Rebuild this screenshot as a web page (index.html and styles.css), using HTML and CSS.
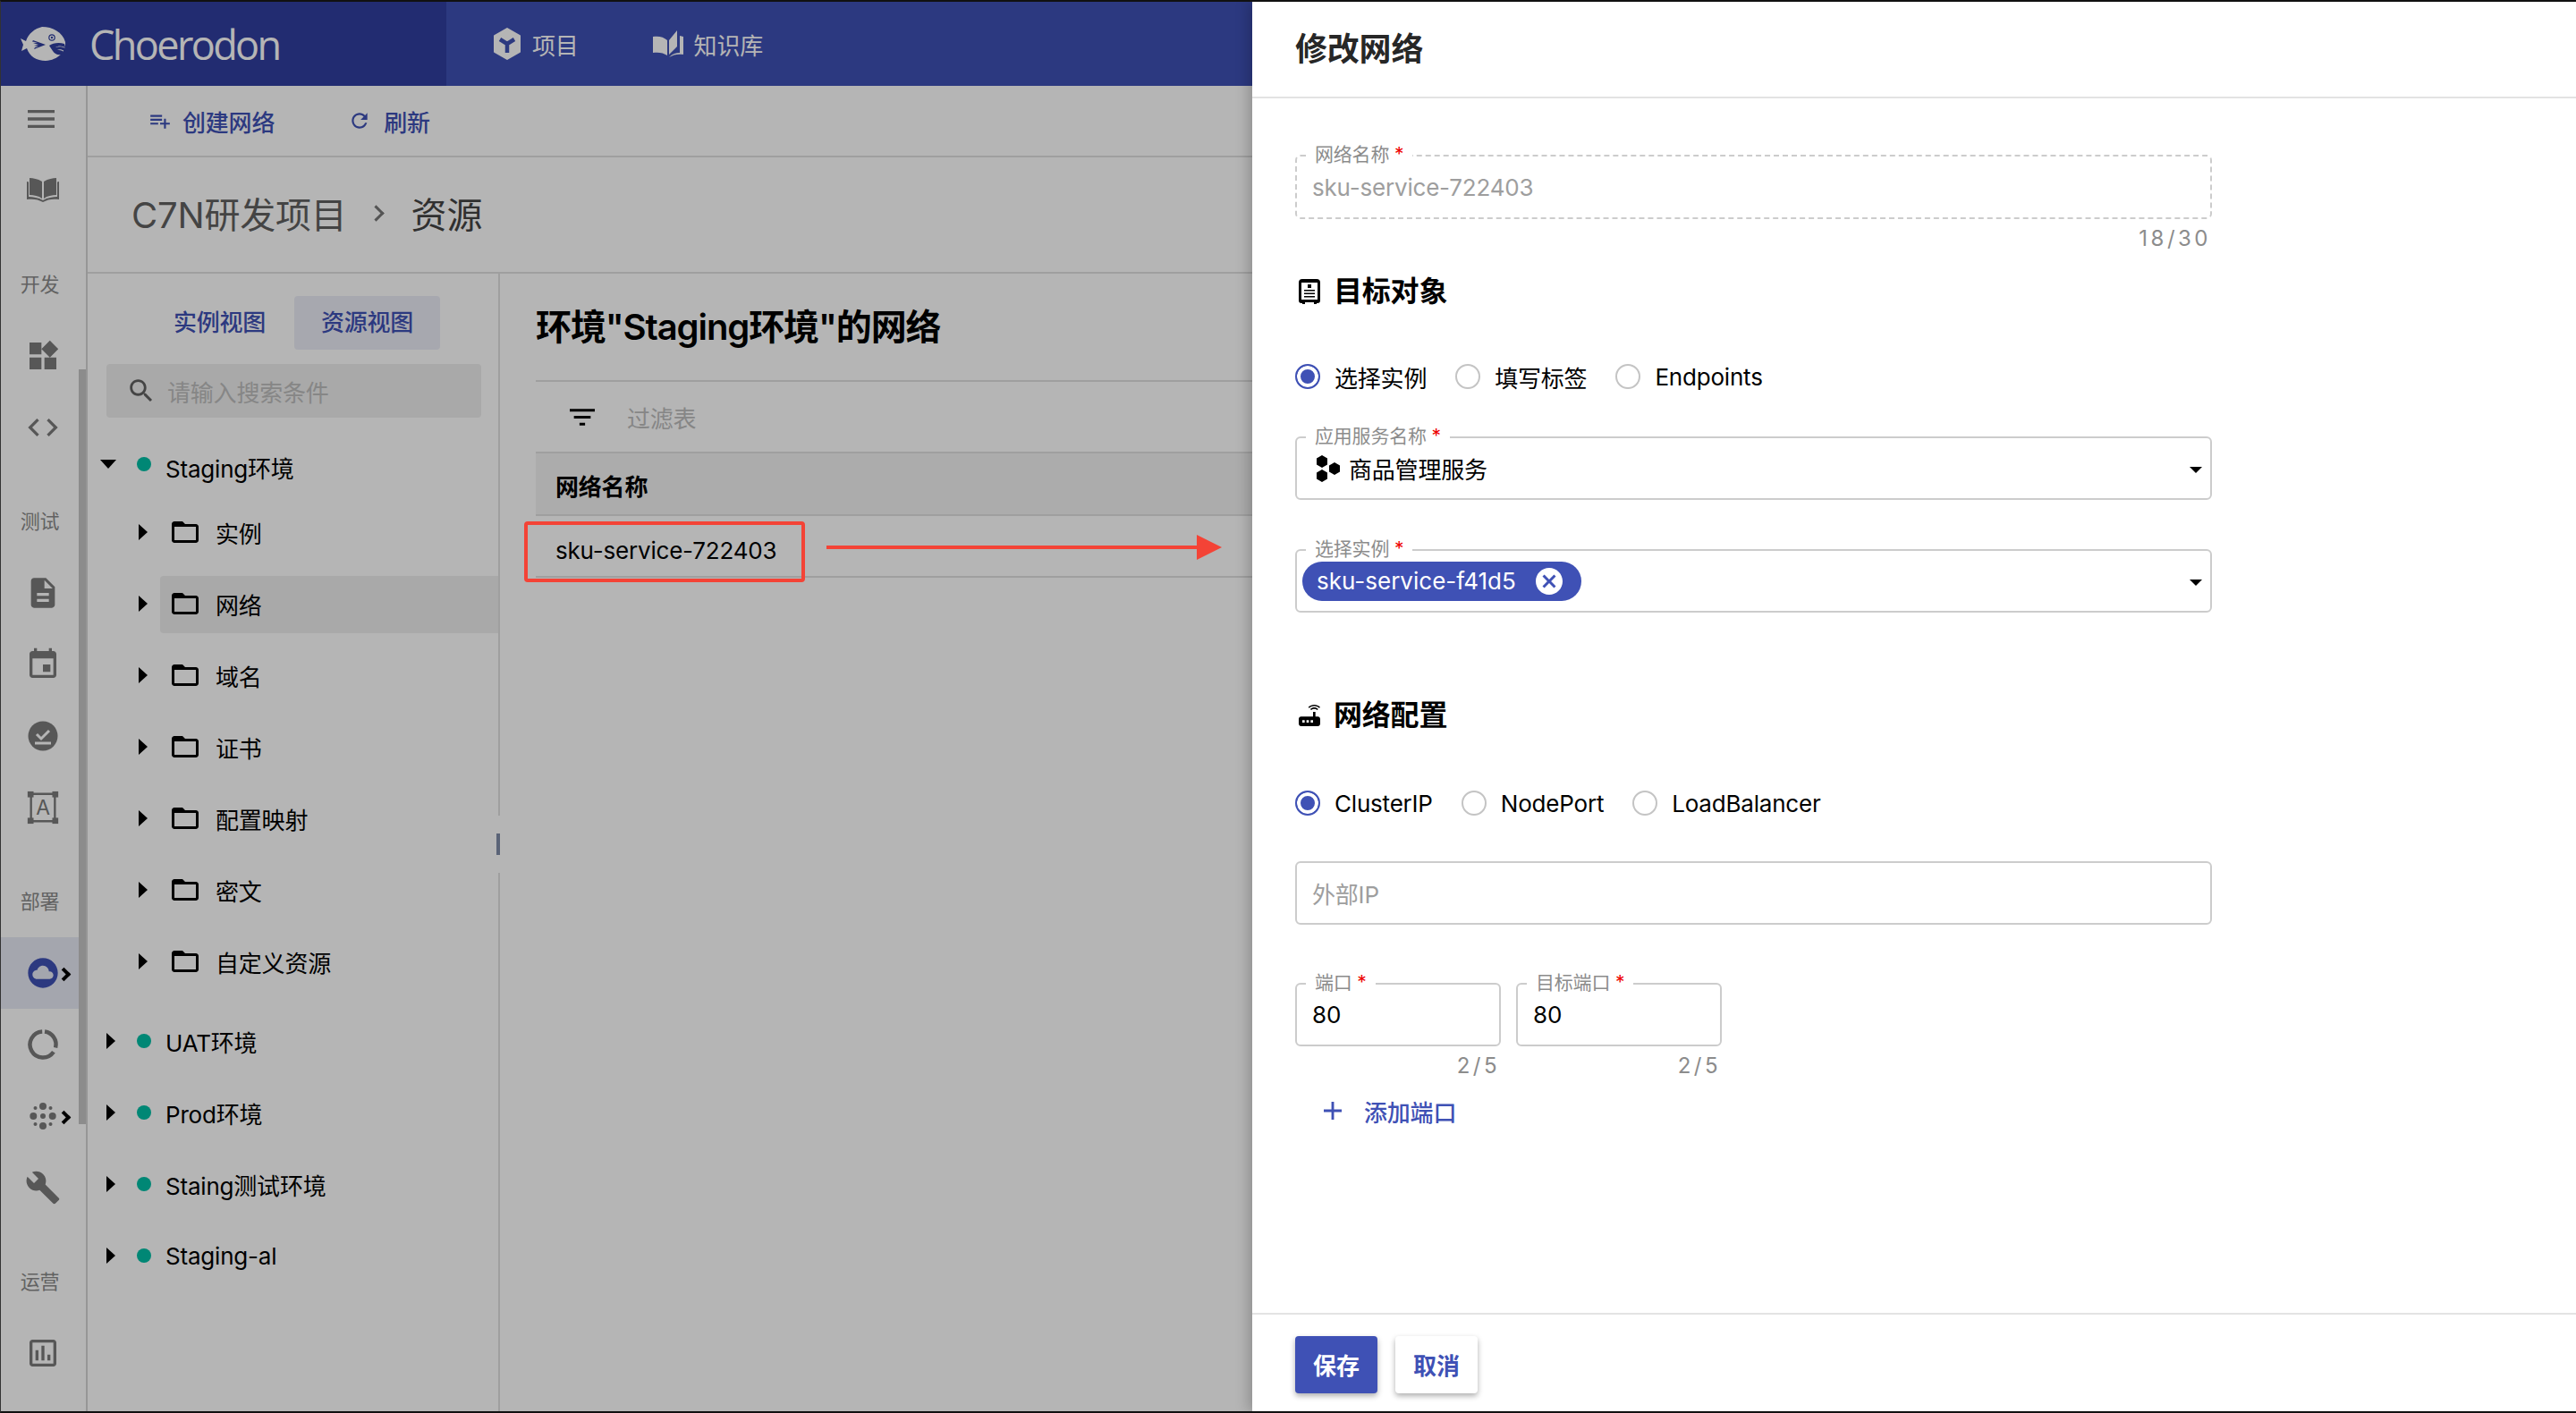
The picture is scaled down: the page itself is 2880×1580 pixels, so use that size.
FILE: index.html
```html
<!DOCTYPE html>
<html lang="en">
  <head>
    <meta charset="UTF-8" />
    <title>Choerodon - 修改网络</title>
    <link rel="stylesheet" href="styles.css">
  </head>

  <body>
    <div class="app">
      <header class="topbar">
        <div class="brand">
          <svg class="brand-logo" viewBox="0 0 52 38">
            <path fill="#fff" d="M1 13l6 3C10 7 17 2 25 0c12 0 23 6 26 17 1 11-8 20-22 21C19 38 11 33 8 24l-6 3 2-7z"/>
            <path fill="#303f9f" d="M15 15l14 5-13 5 1-2 4-1-5-1 5-1-6-2 5-.5-6-1z"/>
            <circle cx="36" cy="12" r="3.200" fill="none" stroke="#303f9f" stroke-width="1.200"/>
            <circle cx="36" cy="12" r="1.200" fill="#303f9f"/>
            <path fill="#303f9f" d="M33 21c4-3 11-4 17-2l1 4c-4-2-8-2-11 0 3-1 8-1 11 1l-1 3c-3-2-6-2-8-1 2 0 5 0 7 2l-2 3c-5 1-8-1-10-4z"/>
          </svg>
          <span class="brand-name">Choerodon</span>
        </div>
        <nav class="topnav">
          <a class="topnav-item">
            <svg class="topnav-cube" viewBox="0 0 32 36">
              <path fill="#fff" stroke="#fff" stroke-width="2" stroke-linejoin="round" d="M16 1l14 8v18l-14 8-14-8V9z"/>
              <path fill="none" stroke="#3f51b5" stroke-width="4.500" d="M8 13l8 5 8-5M16 18v10"/>
            </svg>
            项目
          </a>
          <a class="topnav-item">
            <svg class="topnav-book" viewBox="0 0 34 30">
              <path fill="#fff" d="M0 7c6-1 12 0 16 4v17c-4-3-10-4-16-3zM18 11L27 0v18l-9 9zM30 6l4 1v20c-6-1-11 0-16 3 4-4 8-5 12-5z"/>
            </svg>
            知识库
          </a>
        </nav>
      </header>

      <div class="workspace">
        <aside class="sidebar">
          <div class="side-item side-menu">
            <svg class="side-icon" viewBox="0 0 24 24"><path d="M3 18h18v-2H3v2zm0-5h18v-2H3v2zm0-7v2h18V6H3z"/></svg>
          </div>
          <div class="side-item">
            <svg class="side-icon" viewBox="0 0 40 40"><path d="M5 6c4 0 9 1 14 4v19c-4-3-9-4-14-4zM35 6c-4 0-9 1-14 4v19c4-3 9-4 14-4zM2 10l2 .5V27c5 0 11 1 16 4 5-3 11-4 16-4V10.500l2-.5v20c-7-1-13 0-18 3-5-3-11-4-18-3z"/></svg>
          </div>
          <div class="side-label">开发</div>
          <div class="side-item">
            <svg class="side-icon" viewBox="0 0 24 24"><path d="M13 13v8h8v-8h-8zM3 21h8v-8H3v8zM3 3v8h8V3H3zm13.660-1.310L11 7.340 16.660 13l5.660-5.660-5.660-5.650z"/></svg>
          </div>
          <div class="side-item">
            <svg class="side-icon" viewBox="0 0 24 24"><path d="M9.400 16.600L4.800 12l4.600-4.600L8 6l-6 6 6 6 1.400-1.400zm5.200 0l4.600-4.600-4.600-4.600L16 6l6 6-6 6-1.400-1.400z"/></svg>
          </div>
          <div class="side-label">测试</div>
          <div class="side-item">
            <svg class="side-icon" viewBox="0 0 24 24"><path d="M14 2H6c-1.100 0-1.990.9-1.990 2L4 20c0 1.100.89 2 1.990 2H18c1.100 0 2-.9 2-2V8l-6-6zm2 16H8v-2h8v2zm0-4H8v-2h8v2zm-3-5V3.500L18.500 9H13z"/></svg>
          </div>
          <div class="side-item">
            <svg class="side-icon" viewBox="0 0 24 24"><path d="M17 12h-5v5h5v-5zM16 1v2H8V1H6v2H5c-1.110 0-1.990.9-1.990 2L3 19c0 1.100.89 2 2 2h14c1.100 0 2-.9 2-2V5c0-1.100-.9-2-2-2h-1V1h-2zm3 18H5V8h14v11z"/></svg>
          </div>
          <div class="side-item">
            <svg class="side-icon" viewBox="0 0 40 40">
              <circle cx="20" cy="20" r="16.500"/>
              <path fill="none" stroke="#fff" stroke-width="3" d="M13 18l5 5 9-9"/>
              <path fill="none" stroke="#fff" stroke-width="3" d="M11 28h18"/>
            </svg>
          </div>
          <div class="side-item">
            <svg class="side-icon" viewBox="-2 -1 42 42">
              <path fill="none" stroke="currentColor" stroke-width="2.500" d="M5 4h28M5 36h28M5 4v32M33 4v32"/>
              <rect x="1" y="1" width="7" height="7"/><rect x="30" y="1" width="7" height="7"/>
              <rect x="1" y="32" width="7" height="7"/><rect x="30" y="32" width="7" height="7"/>
              <text x="19" y="28" class="icon-letter">A</text>
            </svg>
          </div>
          <div class="side-label">部署</div>
          <div class="side-item side-item-active">
            <svg class="side-icon" viewBox="0 0 24 24"><path d="M12 2C6.480 2 2 6.480 2 12s4.480 10 10 10 10-4.480 10-10S17.520 2 12 2zm4.500 14H8c-1.660 0-3-1.340-3-3s1.340-3 3-3l.14.01C8.580 8.280 10.130 7 12 7c2.210 0 4 1.790 4 4h.5c1.380 0 2.500 1.120 2.500 2.500S17.880 16 16.500 16z"/></svg>
            <span class="side-chevron"></span>
          </div>
          <div class="side-item">
            <svg class="side-icon" viewBox="0 0 40 40">
              <path fill="none" stroke="currentColor" stroke-width="4.500" d="M22 5.600A14.500 14.500 0 0 1 34.100 23.500M31.900 28.300A14.500 14.500 0 1 1 19.200 5.500"/>
            </svg>
          </div>
          <div class="side-item">
            <svg class="side-icon" viewBox="0 0 40 40">
              <circle cx="20" cy="9" r="4"/><circle cx="20" cy="31" r="4"/>
              <circle cx="9.300" cy="20" r="4"/><circle cx="20" cy="20" r="3"/><circle cx="30.700" cy="20" r="4"/>
              <circle cx="11.500" cy="11" r="2"/><circle cx="28.500" cy="11" r="2"/><circle cx="11.500" cy="29" r="2"/><circle cx="28.500" cy="29" r="2"/>
            </svg>
            <span class="side-chevron"></span>
          </div>
          <div class="side-item">
            <svg class="side-icon" viewBox="0 0 24 24"><path d="M22.700 19l-9.100-9.100c.9-2.300.4-5-1.500-6.900-2-2-5-2.400-7.400-1.300L9 6 6 9 1.600 4.700C.4 7.100.9 10.100 2.900 12.100c1.900 1.900 4.600 2.400 6.900 1.500l9.100 9.100c.4.4 1 .4 1.400 0l2.300-2.300c.5-.4.5-1.100.1-1.400z"/></svg>
          </div>
          <div class="side-label">运营</div>
          <div class="side-item">
            <svg class="side-icon" viewBox="0 0 24 24"><path d="M19 3H5c-1.100 0-2 .9-2 2v14c0 1.100.9 2 2 2h14c1.100 0 2-.9 2-2V5c0-1.100-.9-2-2-2zm0 16H5V5h14v14zM7 10h2v7H7zm4-3h2v10h-2zm4 6h2v4h-2z"/></svg>
          </div>
          <div class="side-scroll"></div>
        </aside>

        <main class="content">
          <div class="toolbar">
            <a class="tool-btn">
              <svg class="tool-icon" viewBox="0 0 24 24"><path d="M14 10H2v2h12v-2zm0-4H2v2h12V6zm4 8v-4h-2v4h-4v2h4v4h2v-4h4v-2h-4zM2 16h8v-2H2v2z"/></svg>
              创建网络
            </a>
            <a class="tool-btn tool-refresh">
              <svg class="tool-icon" viewBox="0 0 24 24"><path d="M17.650 6.350C16.200 4.900 14.210 4 12 4c-4.420 0-7.990 3.580-7.990 8s3.570 8 7.990 8c3.730 0 6.840-2.550 7.730-6h-2.080c-.82 2.330-3.040 4-5.650 4-3.310 0-6-2.690-6-6s2.690-6 6-6c1.660 0 3.140.69 4.220 1.780L13 11h7V4l-2.350 2.350z"/></svg>
              刷新
            </a>
          </div>

          <div class="breadcrumb">
            <span class="crumb-parent">C7N研发项目</span>
            <span class="crumb-sep"></span>
            <span class="crumb-current">资源</span>
          </div>

          <div class="split">
            <section class="tree-panel">
              <div class="view-tabs">
                <span class="view-tab">实例视图</span>
                <span class="view-tab view-tab-active">资源视图</span>
              </div>
              <div class="tree-search">
                <svg class="search-icon" viewBox="0 0 24 24"><path d="M15.500 14h-.79l-.28-.27C15.410 12.590 16 11.110 16 9.500 16 5.910 13.090 3 9.500 3S3 5.910 3 9.500 5.910 16 9.500 16c1.610 0 3.090-.59 4.230-1.570l.27.28v.79l5 4.990L20.490 19l-4.990-5zm-6 0C7.010 14 5 11.990 5 9.500S7.010 5 9.500 5 14 7.010 14 9.500 11.990 14 9.500 14z"/></svg>
                请输入搜索条件
              </div>

              <ul class="tree">
                <li class="tree-env tree-env-open"><span class="caret-down"></span><span class="env-dot"></span><span class="env-name">Staging环境</span></li>
                <li class="tree-leaf"><span class="caret-right"></span><svg class="folder" viewBox="2 4 20 16"><path d="M20 6h-8l-2-2H4c-1.100 0-1.990.9-1.990 2L2 18c0 1.100.9 2 2 2h16c1.100 0 2-.9 2-2V8c0-1.100-.9-2-2-2zm0 12H4V8h16v10z"/></svg>实例</li>
                <li class="tree-leaf tree-leaf-active"><span class="caret-right"></span><svg class="folder" viewBox="2 4 20 16"><path d="M20 6h-8l-2-2H4c-1.100 0-1.990.9-1.990 2L2 18c0 1.100.9 2 2 2h16c1.100 0 2-.9 2-2V8c0-1.100-.9-2-2-2zm0 12H4V8h16v10z"/></svg>网络</li>
                <li class="tree-leaf"><span class="caret-right"></span><svg class="folder" viewBox="2 4 20 16"><path d="M20 6h-8l-2-2H4c-1.100 0-1.990.9-1.990 2L2 18c0 1.100.9 2 2 2h16c1.100 0 2-.9 2-2V8c0-1.100-.9-2-2-2zm0 12H4V8h16v10z"/></svg>域名</li>
                <li class="tree-leaf"><span class="caret-right"></span><svg class="folder" viewBox="2 4 20 16"><path d="M20 6h-8l-2-2H4c-1.100 0-1.990.9-1.990 2L2 18c0 1.100.9 2 2 2h16c1.100 0 2-.9 2-2V8c0-1.100-.9-2-2-2zm0 12H4V8h16v10z"/></svg>证书</li>
                <li class="tree-leaf"><span class="caret-right"></span><svg class="folder" viewBox="2 4 20 16"><path d="M20 6h-8l-2-2H4c-1.100 0-1.990.9-1.990 2L2 18c0 1.100.9 2 2 2h16c1.100 0 2-.9 2-2V8c0-1.100-.9-2-2-2zm0 12H4V8h16v10z"/></svg>配置映射</li>
                <li class="tree-leaf"><span class="caret-right"></span><svg class="folder" viewBox="2 4 20 16"><path d="M20 6h-8l-2-2H4c-1.100 0-1.990.9-1.990 2L2 18c0 1.100.9 2 2 2h16c1.100 0 2-.9 2-2V8c0-1.100-.9-2-2-2zm0 12H4V8h16v10z"/></svg>密文</li>
                <li class="tree-leaf"><span class="caret-right"></span><svg class="folder" viewBox="2 4 20 16"><path d="M20 6h-8l-2-2H4c-1.100 0-1.990.9-1.990 2L2 18c0 1.100.9 2 2 2h16c1.100 0 2-.9 2-2V8c0-1.100-.9-2-2-2zm0 12H4V8h16v10z"/></svg>自定义资源</li>
                <li class="tree-env tree-env-gap"><span class="caret-right"></span><span class="env-dot"></span>UAT环境</li>
                <li class="tree-env"><span class="caret-right"></span><span class="env-dot"></span>Prod环境</li>
                <li class="tree-env"><span class="caret-right"></span><span class="env-dot"></span>Staing测试环境</li>
                <li class="tree-env"><span class="caret-right"></span><span class="env-dot"></span>Staging-al</li>
              </ul>
              <span class="panel-handle"></span>
            </section>

            <section class="list-panel">
              <h2 class="list-title">环境"Staging环境"的网络</h2>
              <div class="filter-bar">
                <svg class="filter-icon" viewBox="3 6 18 12"><path d="M10 18h4v-2h-4v2zM3 6v2h18V6H3zm3 7h12v-2H6v2z"/></svg>
                过滤表
              </div>
              <div class="table-head">网络名称</div>
              <div class="table-row">sku-service-722403</div>
            </section>
          </div>
        </main>
      </div>

      <div class="dim"></div>

      <!-- red annotation drawn on the screenshot -->
      <div class="mark-box"></div>
      <svg class="mark-arrow" viewBox="0 0 442 28">
        <path d="M0 12h414V0l28 14-28 14V16H0z"/>
      </svg>

      <aside class="modal">
        <h1 class="modal-head">修改网络</h1>

        <div class="modal-body">
          <div class="field field-disabled">
            <label class="field-label">网络名称 <i>*</i></label>
            <span class="field-value">sku-service-722403</span>
          </div>
          <div class="field-count field-count-name">18/30</div>

          <h3 class="section-title section-target">
            <svg class="section-icon" viewBox="0 0 24 28">
              <path fill-rule="evenodd" d="M4 0h16a4 4 0 0 1 4 4v20a3 3 0 0 1-3 3h-1v1h-3v-2H7v2H4v-1H3a3 3 0 0 1-3-3V4a4 4 0 0 1 4-4zM3 4v19h18V4zm7 2h4v4h-4zm-4 6h12v1.500H6zm0 3.500h12V17H6zM6 19h12v1.500H6z"/>
            </svg>
            目标对象
          </h3>

          <div class="radios radios-target">
            <label class="radio radio-on"><span class="radio-mark"></span>选择实例</label>
            <label class="radio"><span class="radio-mark"></span>填写标签</label>
            <label class="radio"><span class="radio-mark"></span>Endpoints</label>
          </div>

          <div class="field field-select field-service">
            <label class="field-label">应用服务名称 <i>*</i></label>
            <svg class="service-icon" viewBox="0 0 29 30">
              <path d="M8 0l6 3.500v7L8 14l-6-3.500v-7zM8 16l6 3.500v7L8 30l-6-3.500v-7zM22 8l6 3.500v7L22 22l-6-3.500v-7z"/>
            </svg>
            <span class="field-value">商品管理服务</span>
            <span class="select-caret"></span>
          </div>

          <div class="field field-select field-instance">
            <label class="field-label">选择实例 <i>*</i></label>
            <span class="chip">
              sku-service-f41d5
              <svg class="chip-close" viewBox="2 2 20 20"><path d="M12 2C6.470 2 2 6.470 2 12s4.470 10 10 10 10-4.470 10-10S17.530 2 12 2zm5 13.590L15.590 17 12 13.410 8.410 17 7 15.590 10.590 12 7 8.410 8.410 7 12 10.590 15.590 7 17 8.410 13.410 12 17 15.590z"/></svg>
            </span>
            <span class="select-caret"></span>
          </div>

          <h3 class="section-title section-network">
            <svg class="section-icon" viewBox="3 3 18 18"><path d="M20.200 5.900l.8-.8C19.600 3.700 17.800 3 16 3s-3.600.7-5 2.100l.8.8C13 4.800 14.500 4.200 16 4.200s3 .6 4.200 1.700zm-.9.8c-.9-.9-2.100-1.400-3.300-1.400s-2.400.5-3.300 1.400l.8.8c.7-.7 1.600-1 2.500-1 .9 0 1.800.3 2.500 1l.8-.8zM19 13h-2V9h-2v4H5c-1.100 0-2 .9-2 2v4c0 1.100.9 2 2 2h14c1.100 0 2-.9 2-2v-4c0-1.100-.9-2-2-2zM8 18H6v-2h2v2zm3.500 0h-2v-2h2v2zm3.500 0h-2v-2h2v2z"/></svg>
            网络配置
          </h3>

          <div class="radios radios-network">
            <label class="radio radio-on"><span class="radio-mark"></span>ClusterIP</label>
            <label class="radio"><span class="radio-mark"></span>NodePort</label>
            <label class="radio"><span class="radio-mark"></span>LoadBalancer</label>
          </div>

          <div class="field field-ip">
            <span class="field-placeholder">外部IP</span>
          </div>

          <div class="ports">
            <div class="port">
              <div class="field">
                <label class="field-label">端口 <i>*</i></label>
                <span class="field-value">80</span>
              </div>
              <div class="field-count">2/5</div>
            </div>
            <div class="port">
              <div class="field">
                <label class="field-label">目标端口 <i>*</i></label>
                <span class="field-value">80</span>
              </div>
              <div class="field-count">2/5</div>
            </div>
          </div>

          <a class="add-port">
            <svg class="add-icon" viewBox="5 5 14 14"><path d="M19 13h-6v6h-2v-6H5v-2h6V5h2v6h6v2z"/></svg>
            添加端口
          </a>
        </div>

        <div class="modal-foot">
          <button class="btn btn-primary">保存</button>
          <button class="btn">取消</button>
        </div>
      </aside>
    </div>
  </body>
</html>
```

FILE: styles.css
```css
* {
  box-sizing: border-box;
  margin: 0;
  padding: 0;
}

body {
  font-family: Inter, "Noto Sans CJK SC", sans-serif;
  font-size: 26px;
  letter-spacing: -0.2px;
  color: #000;
  background: #fff;
  width: 2880px;
  height: 1580px;
  overflow: hidden;
}

.app {
  position: relative;
  width: 2880px;
  height: 1580px;
  display: flex;
  flex-direction: column;
  border-top: 2px solid #111;
  border-bottom: 2px solid #111;
  border-left: 1px solid #333;
  overflow: hidden;
}

/* top bar */
.topbar {
  height: 94px;
  flex: none;
  display: flex;
  background: #3f51b5;
  color: #fff;
}

.brand {
  width: 498px;
  background: #303f9f;
  display: flex;
  align-items: center;
  padding-left: 21px;
}

.brand-logo {
  width: 52px;
  height: 38px;
  margin-right: 26px;
}

.brand-name {
  font-family: "Open Sans", sans-serif;
  font-size: 45px;
  font-weight: 400;
  letter-spacing: -2.6px;
}

.topnav {
  display: flex;
  align-items: center;
  padding-left: 52px;
}

.topnav-item {
  display: flex;
  align-items: center;
  gap: 12px;
  margin-right: 83px;
}

.topnav-cube {
  width: 32px;
  height: 36px;
}

.topnav-book {
  width: 34px;
  height: 30px;
}

.workspace {
  flex: 1;
  display: flex;
  min-height: 0;
}

/* sidebar */
.sidebar {
  position: relative;
  width: 97px;
  flex: none;
  border-right: 2px solid #d4d4d4;
  color: #7b7b7b;
}

.side-item {
  position: relative;
  width: 87px;
  height: 80px;
  display: flex;
  align-items: center;
  justify-content: center;
  padding-left: 7px;
}

.side-menu {
  height: 74px;
  margin-bottom: 3px;
  padding-left: 3px;
}

.side-item-active {
  background: #e8eaf6;
  color: #3f51b5;
}

.side-icon {
  width: 40px;
  height: 40px;
  fill: currentColor;
}

.icon-letter {
  font-size: 24px;
  text-anchor: middle;
  fill: currentColor;
}

.side-label {
  height: 105px;
  width: 87px;
  display: flex;
  align-items: flex-end;
  justify-content: center;
  padding-bottom: 24px;
  line-height: 32px;
  font-size: 22px;
  color: #8a8a8a;
}

.side-chevron {
  position: absolute;
  right: 11px;
  top: 50%;
  width: 11px;
  height: 11px;
  margin-top: -4px;
  border-top: 4px solid #000;
  border-right: 4px solid #000;
  transform: rotate(45deg);
}

.side-scroll {
  position: absolute;
  left: 87px;
  top: 317px;
  width: 8px;
  height: 844px;
  background: #c6c6c6;
}

/* main area */
.content {
  flex: 1;
  display: flex;
  flex-direction: column;
  min-width: 0;
}

.toolbar {
  height: 80px;
  flex: none;
  display: flex;
  align-items: center;
  padding-left: 68px;
  border-bottom: 2px solid #e0e0e0;
  color: #3f51b5;
  font-weight: 500;
}

.tool-btn {
  display: flex;
  align-items: center;
  gap: 12px;
}

.tool-refresh {
  margin-left: 82px;
  gap: 14px;
}

.tool-icon {
  width: 26px;
  height: 26px;
  fill: currentColor;
}

.breadcrumb {
  height: 130px;
  flex: none;
  display: flex;
  align-items: center;
  padding: 0 0 4px 49px;
  border-bottom: 2px solid #e0e0e0;
  font-size: 40px;
  font-weight: 400;
}

.crumb-parent {
  color: #616161;
}

.crumb-sep {
  width: 13px;
  height: 13px;
  margin: 0 33px 0 26px;
  border-top: 3px solid #777;
  border-right: 3px solid #777;
  transform: rotate(45deg);
}

.crumb-current {
  color: #444;
}

.split {
  flex: 1;
  display: flex;
  min-height: 0;
}

/* tree */
.tree-panel {
  position: relative;
  width: 461px;
  flex: none;
  border-right: 2px solid #e0e0e0;
}

.view-tabs {
  display: flex;
  padding: 25px 0 0 68px;
  color: #3f51b5;
}

.view-tab {
  width: 163px;
  height: 60px;
  line-height: 60px;
  text-align: center;
  border-radius: 4px;
  font-weight: 500;
}

.view-tab:first-child {
  padding-right: 4px;
}

.view-tab-active {
  background: #ecedf7;
}

.tree-search {
  display: flex;
  align-items: center;
  gap: 12px;
  width: 419px;
  height: 60px;
  margin: 16px 0 0 21px;
  padding-left: 22px;
  border-radius: 4px;
  background: #eeeeee;
  color: #bdbdbd;
}

.search-icon {
  width: 34px;
  height: 34px;
  fill: #616161;
}

.tree {
  list-style: none;
  margin-top: 16px;
}

.tree-env,
.tree-leaf {
  display: flex;
  align-items: center;
  height: 80px;
}

.tree-env {
  padding-left: 21px;
}

.tree-env-open {
  height: 72px;
  padding-left: 14px;
}

.env-name {
  padding-top: 6px;
}

.tree-env-gap {
  margin-top: 9px;
}

.tree-leaf {
  margin-left: 81px;
}

.tree-leaf-active {
  position: relative;
  z-index: 0;
}

.tree-leaf-active::before {
  content: "";
  position: absolute;
  z-index: -1;
  left: 0;
  right: 0;
  top: 9px;
  height: 64px;
  border-radius: 4px 0 0 4px;
  background: #eeeeee;
}

.caret-right {
  width: 0;
  height: 0;
  flex: none;
  border-top: 9px solid transparent;
  border-bottom: 9px solid transparent;
  border-left: 10px solid #000;
}

.caret-down {
  width: 0;
  height: 0;
  flex: none;
  border-left: 9px solid transparent;
  border-right: 9px solid transparent;
  border-top: 10px solid #000;
  margin-right: 23px;
}

.tree-env .caret-right {
  margin-right: 24px;
}

.tree-env .env-dot {
  margin-right: 16px;
}

.tree-leaf .caret-right {
  margin-left: -24px;
  margin-right: 27px;
}

.env-dot {
  width: 16px;
  height: 16px;
  flex: none;
  border-radius: 50%;
  background: #00bfa5;
}

.tree-leaf .folder {
  width: 30px;
  height: 24px;
  margin-right: 19px;
  flex: none;
}

.panel-handle {
  position: absolute;
  right: -2px;
  top: 626px;
  width: 4px;
  height: 24px;
  background: #7f8ca8;
  box-shadow: 0 -20px 0 #fff, 0 20px 0 #fff;
}

/* list */
.list-panel {
  flex: 1;
  padding-left: 40px;
  min-width: 0;
}

.list-title {
  height: 119px;
  line-height: 84px;
  padding-top: 18px;
  font-size: 40px;
  font-weight: 600;
  letter-spacing: -1.1px;
}

.filter-bar {
  height: 80px;
  display: flex;
  align-items: center;
  padding-left: 38px;
  gap: 36px;
  border-top: 2px solid #e0e0e0;
  color: #bdbdbd;
}

.filter-icon {
  width: 28px;
  height: 19px;
}

.table-head {
  height: 72px;
  display: flex;
  align-items: center;
  padding: 3px 0 0 22px;
  background: #f2f2f2;
  border-top: 2px solid #e0e0e0;
  border-bottom: 2px solid #e0e0e0;
  font-weight: 600;
}

.table-row {
  height: 69px;
  display: flex;
  align-items: center;
  padding: 9px 0 0 22px;
  border-bottom: 2px solid #e0e0e0;
}

.dim {
  position: absolute;
  inset: 0;
  background: rgba(0, 0, 0, 0.29);
}

/* annotation */
.mark-box {
  position: absolute;
  left: 585px;
  top: 581px;
  width: 314px;
  height: 68px;
  border: 4px solid #f44336;
  border-radius: 4px;
}

.mark-arrow {
  position: absolute;
  left: 923px;
  top: 596px;
  width: 442px;
  height: 28px;
  fill: #f44336;
}

/* modal */
.modal {
  position: absolute;
  top: 0;
  right: 0;
  bottom: 0;
  width: 1480px;
  display: flex;
  flex-direction: column;
  background: #fff;
  box-shadow: -4px 0 14px rgba(0, 0, 0, 0.22);
}

.modal-head {
  height: 108px;
  flex: none;
  display: flex;
  align-items: center;
  padding: 0 0 6px 48px;
  border-bottom: 2px solid #e3e3e3;
  font-size: 36px;
  font-weight: 600;
  color: rgba(0, 0, 0, 0.87);
}

.modal-body {
  flex: 1;
  padding: 63px 0 0 48px;
  min-height: 0;
}

.field {
  position: relative;
  width: 1025px;
  height: 71px;
  display: flex;
  align-items: center;
  padding-left: 17px;
  border: 2px solid #ccc;
  border-radius: 6px;
}

.field-disabled {
  height: 72px;
  border-style: dashed;
  color: #9e9e9e;
}

.field-label {
  position: absolute;
  left: 10px;
  top: -14px;
  padding: 0 10px;
  background: #fff;
  font-size: 21px;
  line-height: 24px;
  color: #8c8c8c;
  white-space: nowrap;
}

.field-label i {
  font-style: normal;
  color: #e00;
}

.field-placeholder {
  color: #9e9e9e;
}

.field-count {
  text-align: right;
  padding-right: 1px;
  font-size: 24px;
  line-height: 44px;
  letter-spacing: 3.5px;
  color: #8c8c8c;
}

.field-count-name {
  width: 1025px;
}

.section-title {
  display: flex;
  align-items: center;
  gap: 15px;
  font-size: 32px;
  line-height: 40px;
  font-weight: 600;
}

.section-target {
  margin-top: 17px;
}

.section-network {
  margin-top: 95px;
}

.section-icon {
  width: 24px;
  height: 28px;
  margin-left: 4px;
  flex: none;
}

.radios {
  display: flex;
  gap: 32px;
  height: 28px;
  align-items: center;
}

.radios-target {
  margin-top: 61px;
}

.radios-network {
  margin-top: 64px;
}

.radio {
  display: flex;
  align-items: center;
  gap: 16px;
}

.radio-mark {
  width: 28px;
  height: 28px;
  flex: none;
  border: 2px solid #c4c4c4;
  border-radius: 50%;
}

.radio-on .radio-mark {
  border-color: #3f51b5;
  background: #3f51b5;
  box-shadow: inset 0 0 0 4px #fff;
}

.field-service {
  margin-top: 53px;
  gap: 9px;
  padding-left: 20px;
}

.field-instance {
  margin-top: 55px;
  padding-left: 6px;
}

.service-icon {
  width: 29px;
  height: 30px;
  flex: none;
}

.select-caret {
  position: absolute;
  right: 9px;
  top: 32px;
  width: 0;
  height: 0;
  border-left: 7px solid transparent;
  border-right: 7px solid transparent;
  border-top: 7px solid #000;
}

.chip {
  display: flex;
  align-items: center;
  height: 44px;
  width: 312px;
  padding-left: 16px;
  border-radius: 22px;
  background: #3f51b5;
  color: #fff;
  letter-spacing: 0;
}

.chip-close {
  width: 30px;
  height: 30px;
  margin-left: auto;
  margin-right: 21px;
  fill: #fff;
}

.field-ip {
  margin-top: 51px;
}

.ports {
  display: flex;
  gap: 17px;
  margin-top: 65px;
}

.port {
  width: 230px;
}

.port .field {
  width: 230px;
}

.add-port {
  display: flex;
  align-items: center;
  gap: 25px;
  margin: 8px 0 0 32px;
  height: 40px;
  color: #3f51b5;
  font-weight: 500;
}

.add-icon {
  width: 20px;
  height: 20px;
  fill: #3f51b5;
}

.modal-foot {
  height: 110px;
  flex: none;
  display: flex;
  gap: 20px;
  padding: 24px 0 0 48px;
  border-top: 2px solid #e3e3e3;
}

.btn {
  width: 92px;
  height: 64px;
  padding-bottom: 2px;
  border: none;
  border-radius: 4px;
  background: #fff;
  color: #3f51b5;
  font-family: inherit;
  font-size: 26px;
  font-weight: 600;
  box-shadow: 0 3px 6px rgba(0, 0, 0, 0.32);
}

.btn-primary {
  background: #3f51b5;
  color: #fff;
}
```
